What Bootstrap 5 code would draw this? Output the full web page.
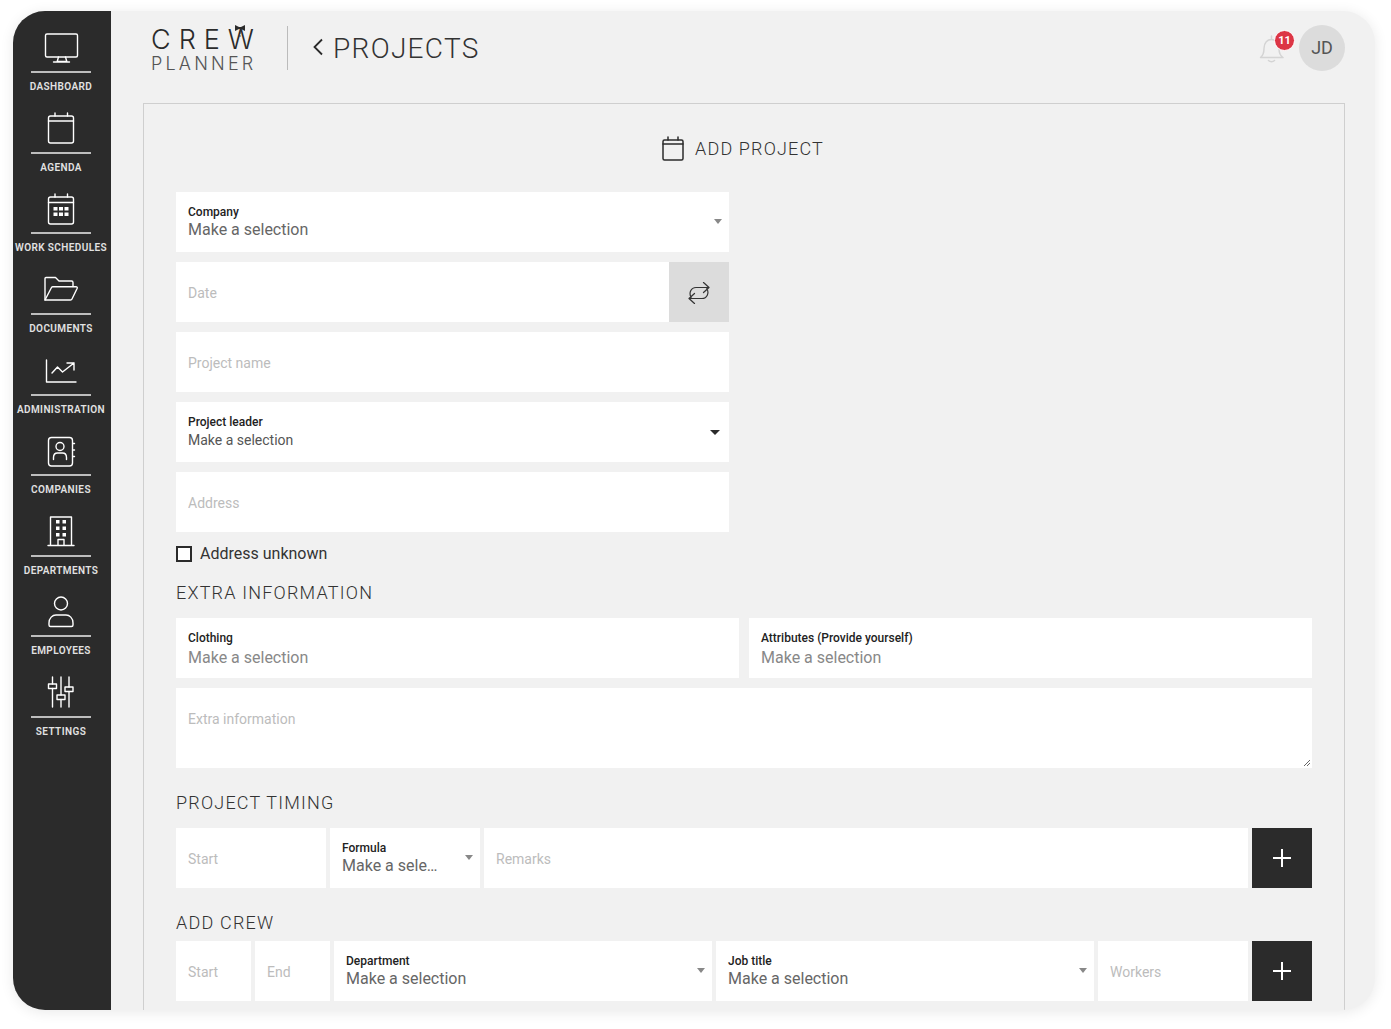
<!DOCTYPE html>
<html lang="en"><head><meta charset="utf-8"><title>Crew Planner</title>
<link href="https://cdn.jsdelivr.net/npm/bootstrap@5.3.0/dist/css/bootstrap.min.css" rel="stylesheet">
<style>
html,body{height:100%;background:#fff;overflow:hidden}
body{font-family:Roboto,"Liberation Sans",sans-serif;color:#2b2b2b}
.app-window{width:1362px;height:999px;margin:11px 0 0 13px;background:#f1f1f1;border-radius:32px;overflow:hidden;box-shadow:0 2px 14px rgba(0,0,0,.09)}
.side{width:98px;flex:none;background:#2b2b2b;padding:15.2px 2px 0 0}
.side-item{height:80.6px;color:#e2e2e2;text-decoration:none}
.side-ico{height:45px;display:flex;align-items:center;justify-content:center}
.side-ico svg{width:36px;height:36px;fill:none;stroke:#fff;stroke-width:1.4;stroke-linecap:round;stroke-linejoin:round}
.side-line{width:60px;height:2px;background:#bdbdbd}
.side-lab{font-size:10px;line-height:12px;font-weight:600;letter-spacing:.4px;margin-top:8px;white-space:nowrap}
.head{height:92px;padding:14px 30px 0 40px}
.logo{width:104px;color:#2b2b2b;position:relative;margin-top:-1px}
.logo-a{font-size:27px;line-height:31px;height:31px;font-weight:300;font-family:Inter,Roboto,sans-serif;letter-spacing:8px;white-space:nowrap}
.logo-b{font-size:18px;line-height:18px;height:18px;font-weight:300;font-family:Inter,Roboto,sans-serif;letter-spacing:3.2px;color:#555;white-space:nowrap}
.tie{position:absolute;left:83px;top:1px;width:12px;height:14px}
.vsep{width:1px;height:44px;background:#bbb;margin:1px 25px 0 32px}
.crumb{font-size:28px;font-weight:300;letter-spacing:1.3px;line-height:44px;color:#333;margin:2px 0 0 10px}
.bell-wrap{position:relative;width:26px;height:30px;margin-right:14px;margin-top:2px}
.notif{position:absolute;left:15px;top:-4px;width:21px;height:21px;border-radius:50%;background:#dc3545;border:1px solid #fff;color:#fff;font-size:11px;font-weight:700;line-height:19px;text-align:center}
.avatar{width:46px;height:46px;border-radius:50%;background:#dcdcdc;color:#555;font-size:18px;line-height:46px;text-align:center}
.pane{margin:0 30px 0 32px;border:1px solid #cfcfcf;border-bottom:0;padding:0 32px;height:907px}
.pane-title{height:88px;padding:1px 2px 0 0;font-size:18px;font-weight:300;letter-spacing:1.15px;color:#333}
.half{width:553px;gap:10px}
.fld{height:60px;background:#fff;border:0;border-radius:0;padding:0 12px;position:relative;min-width:0}
input.fld,textarea.fld{font-size:14px;color:#333;box-shadow:none}
input.fld{padding-top:2px}
input.fld::placeholder,textarea.fld::placeholder{color:#bcbcbc;opacity:1}
textarea.fld{height:80px;padding-top:23px;line-height:16px;margin-top:10px}
textarea.fld::-webkit-resizer{background:linear-gradient(135deg,transparent 45%,#666 45%,#666 55%,transparent 55%,transparent 70%,#666 70%,#666 80%,transparent 80%) right 2px bottom 2px/6px 6px no-repeat}
.fld-sel{display:flex;flex-direction:column;justify-content:center;padding-top:1px}
.fld-sel b{font-size:12px;line-height:14px;font-weight:500;color:#222}
.fld-sel span{font-size:16px;line-height:20px;color:#666;white-space:nowrap;margin-top:1px}
.fld-sel.dark{padding-top:0}
.fld-sel.dark span{font-size:14px;color:#555;margin-top:1px}
.fld-sel.soft{padding-top:3px}
.fld-sel.soft span{color:#888;margin-top:3px}
.caret{position:absolute;right:7px;top:50%;margin-top:-3px;border:4px solid transparent;border-top:5px solid #888;border-bottom:0}
.dark .caret{border-top-color:#2b2b2b;border-width:5px 5px 0;right:9px;margin-top:-2px}
.wd-150{width:150px;flex:none}.wd-75{width:75px;flex:none}.grow-eq{flex:1 1 0}
.swap{width:60px;flex:none;background:#dcdcdc;border:0;border-radius:0;padding:0}
.plus{width:60px;height:60px;flex:none;background:#2b2b2b;border:0;border-radius:0;padding:0}
.plus svg{display:block;margin:0 auto}
.chk{width:16px;height:16px;border:2px solid #2b2b2b;background:#fff;appearance:none;border-radius:0;margin:0 8px 0 0;display:block}
.chk-row{height:43px;font-size:16px;color:#333}
.sec{font-size:18px;font-weight:300;letter-spacing:1.2px;color:#333;line-height:22px}
.sec-a{margin:7px 0 14px}.sec-b{margin:24px 0 14px}.sec-c{margin:24px 0 7px}
.row-gap{gap:10px}
.fl-none{flex:none}
.chev{margin-top:13px}
.tico{margin-right:11px}
</style></head>
<body>
<div class="app-window d-flex">
<nav class="side d-flex flex-column align-items-center">
 <a class="side-item d-flex flex-column align-items-center" href="#"><div class="side-ico"><svg viewBox="0 0 36 36"><rect x="2.500" y="3" width="32" height="23" rx="1.500"/><path d="M15.500 26l-1.300 4.500h9.600L22.500 26M10.500 31h16"/></svg></div><div class="side-line"></div><div class="side-lab">DASHBOARD</div></a>
 <a class="side-item d-flex flex-column align-items-center" href="#"><div class="side-ico"><svg viewBox="0 0 36 36"><rect x="5.500" y="5" width="25" height="27" rx="2"/><path d="M5.500 10h25M12 2v3M24.500 2v3"/></svg></div><div class="side-line"></div><div class="side-lab">AGENDA</div></a>
 <a class="side-item d-flex flex-column align-items-center" href="#"><div class="side-ico"><svg viewBox="0 0 36 36"><rect x="5.500" y="5" width="25" height="27" rx="2"/><path d="M5.500 10.500h25M12 2v3M24.500 2v3"/><g fill="#fff" stroke="none"><rect x="10.500" y="15" width="4" height="3.500"/><rect x="16" y="15" width="4" height="3.500"/><rect x="21.500" y="15" width="4" height="3.500"/><rect x="10.500" y="20.500" width="4" height="3.500"/><rect x="16" y="20.500" width="4" height="3.500"/><rect x="21.500" y="20.500" width="4" height="3.500"/></g></svg></div><div class="side-line"></div><div class="side-lab">WORK SCHEDULES</div></a>
 <a class="side-item d-flex flex-column align-items-center" href="#"><div class="side-ico"><svg viewBox="0 0 36 36"><path d="M2 28V6.500C2 6 2.500 5.500 3 5.500h9.500l3.500 3.500h12.500c.8 0 1.500.7 1.500 1.500v4"/><path d="M2 28l6.500-12.500c.3-.5.8-.8 1.300-.8H33c1 0 1.500.8 1.200 1.500L29 27c-.3.700-.8 1-1.500 1z"/></svg></div><div class="side-line"></div><div class="side-lab">DOCUMENTS</div></a>
 <a class="side-item d-flex flex-column align-items-center" href="#"><div class="side-ico"><svg viewBox="0 0 36 36"><path d="M3.500 7v22h29.500M9 20l5.500-6 5 5L31 10M24 10h7v7"/></svg></div><div class="side-line"></div><div class="side-lab">ADMINISTRATION</div></a>
 <a class="side-item d-flex flex-column align-items-center" href="#"><div class="side-ico"><svg viewBox="0 0 36 36"><rect x="5.500" y="3.500" width="24" height="28.500" rx="3"/><circle cx="17" cy="12.500" r="4"/><path d="M10.500 25.500v-2c0-3 2-4.500 4-4.500h5c2 0 4 1.500 4 4.500v2M30 9.500h1.500M30 16h1.500M30 22.500h1.500"/></svg></div><div class="side-line"></div><div class="side-lab">COMPANIES</div></a>
 <a class="side-item d-flex flex-column align-items-center" href="#"><div class="side-ico"><svg viewBox="0 0 36 36"><path d="M7.500 31.500V3h21v28.500M5 31.500h26M15 31.500v-6h6v6"/><g fill="#fff" stroke="none"><rect x="13" y="6" width="3.500" height="3.500"/><rect x="19.500" y="6" width="3.500" height="3.500"/><rect x="13" y="12.500" width="3.500" height="3.500"/><rect x="19.500" y="12.500" width="3.500" height="3.500"/><rect x="13" y="19" width="3.500" height="3.500"/><rect x="19.500" y="19" width="3.500" height="3.500"/></g></svg></div><div class="side-line"></div><div class="side-lab">DEPARTMENTS</div></a>
 <a class="side-item d-flex flex-column align-items-center" href="#"><div class="side-ico"><svg viewBox="0 0 36 36"><circle cx="18" cy="8.500" r="6.500"/><path d="M7.500 31.500h21c1 0 1.500-.5 1.500-1.500v-2c0-5-3.500-8-7-8H13c-3.500 0-7 3-7 8v2c0 1 .5 1.500 1.500 1.500z"/></svg></div><div class="side-line"></div><div class="side-lab">EMPLOYEES</div></a>
 <a class="side-item d-flex flex-column align-items-center" href="#"><div class="side-ico"><svg viewBox="0 0 36 36"><path d="M9.500 2v7M9.500 13.500V32M18 2v18M18 24.500V32M26 2v10M26 16.500V32"/><rect x="5.500" y="9" width="8" height="4.500"/><rect x="14" y="20" width="8" height="4.500"/><rect x="22" y="12" width="8" height="4.500"/></svg></div><div class="side-line"></div><div class="side-lab">SETTINGS</div></a>
</nav>
<main class="flex-grow-1 d-flex flex-column">
 <header class="head d-flex align-items-start">
  <div class="logo"><div class="logo-a">CREW</div><div class="logo-b">PLANNER</div>
   <svg class="tie" viewBox="0 0 12 14"><path d="M1 0l4 2h2l4-2v6L7 4H5L1 6z" fill="#2b2b2b"/><circle cx="6" cy="8" r=".7" fill="#2b2b2b"/><circle cx="6" cy="11" r=".7" fill="#2b2b2b"/></svg></div>
  <div class="vsep"></div>
  <svg width="10" height="18" viewBox="0 0 10 18" class="fl-none chev"><path d="M9 1.500L1.500 9 9 16.500" fill="none" stroke="#2b2b2b" stroke-width="1.800"/></svg>
  <div class="crumb">PROJECTS</div>
  <div class="ms-auto d-flex align-items-center">
   <div class="bell-wrap"><svg width="26" height="30" viewBox="0 0 26 30" fill="none" stroke="#d4d4d4" stroke-width="1.500" stroke-linecap="round" stroke-linejoin="round"><path d="M1.500 23.500c2.500-2 3.500-4 3.500-9C5 8.500 8.500 5.500 12.500 5.500s7.500 3 7.500 9c0 5 1 7 4 9zM12.500 2v3.500M9.500 26.500c1.500 1.500 4.500 1.500 6 0"/></svg><div class="notif">11</div></div>
   <div class="avatar">JD</div>
  </div>
 </header>
 <section class="pane">
  <div class="pane-title d-flex align-items-center justify-content-center">
   <svg class="tico" width="22" height="26" viewBox="0 0 22 26" fill="none" stroke="#2b2b2b" stroke-width="1.500" stroke-linecap="round" stroke-linejoin="round"><rect x="1" y="4" width="20" height="20" rx="1.500"/><path d="M1 8h20M6 1v3M16 1v3"/></svg><span>ADD PROJECT</span>
  </div>
  <div class="half d-flex flex-column">
   <div class="fld fld-sel"><b>Company</b><span>Make a selection</span><i class="caret"></i></div>
   <div class="d-flex"><input class="fld form-control" placeholder="Date"><button class="swap btn" type="button" aria-label="Swap"><svg width="22" height="22" viewBox="0 0 22 22" fill="none" stroke="#333" stroke-width="1.200" stroke-linecap="round" stroke-linejoin="round"><path d="M3.200 15.500C.5 11 3 5.500 8 5.500h13M15.500 .5L21 5.500l-5.500 5M18.800 6.500C21.500 11 19 16.500 14 16.500H1M6.500 21.500L1 16.500l5.500-5"/></svg></button></div>
   <input class="fld form-control" placeholder="Project name">
   <div class="fld fld-sel dark"><b>Project leader</b><span>Make a selection</span><i class="caret"></i></div>
   <input class="fld form-control" placeholder="Address">
  </div>
  <label class="chk-row d-flex align-items-center"><input type="checkbox" class="chk">Address unknown</label>
  <div class="sec sec-a">EXTRA INFORMATION</div>
  <div class="d-flex row-gap"><div class="fld fld-sel soft grow-eq"><b>Clothing</b><span>Make a selection</span></div><div class="fld fld-sel soft grow-eq"><b>Attributes (Provide yourself)</b><span>Make a selection</span></div></div>
  <textarea class="fld form-control" placeholder="Extra information"></textarea>
  <div class="sec sec-b">PROJECT TIMING</div>
  <div class="d-flex gap-1"><input class="fld form-control wd-150" placeholder="Start"><div class="fld fld-sel wd-150"><b>Formula</b><span>Make a sele…</span><i class="caret"></i></div><input class="fld form-control grow-eq" placeholder="Remarks"><button class="plus btn" type="button" aria-label="Add"><svg width="18" height="18" viewBox="0 0 18 18"><path d="M9 0v18M0 9h18" stroke="#fff" stroke-width="2"/></svg></button></div>
  <div class="sec sec-c">ADD CREW</div>
  <div class="d-flex gap-1"><input class="fld form-control wd-75" placeholder="Start"><input class="fld form-control wd-75" placeholder="End"><div class="fld fld-sel grow-eq"><b>Department</b><span>Make a selection</span><i class="caret"></i></div><div class="fld fld-sel grow-eq"><b>Job title</b><span>Make a selection</span><i class="caret"></i></div><input class="fld form-control wd-150" placeholder="Workers"><button class="plus btn" type="button" aria-label="Add"><svg width="18" height="18" viewBox="0 0 18 18"><path d="M9 0v18M0 9h18" stroke="#fff" stroke-width="2"/></svg></button></div>
 </section>
</main>
</div>
<script src="https://cdn.jsdelivr.net/npm/bootstrap@5.3.0/dist/js/bootstrap.bundle.min.js"></script>
</body></html>
